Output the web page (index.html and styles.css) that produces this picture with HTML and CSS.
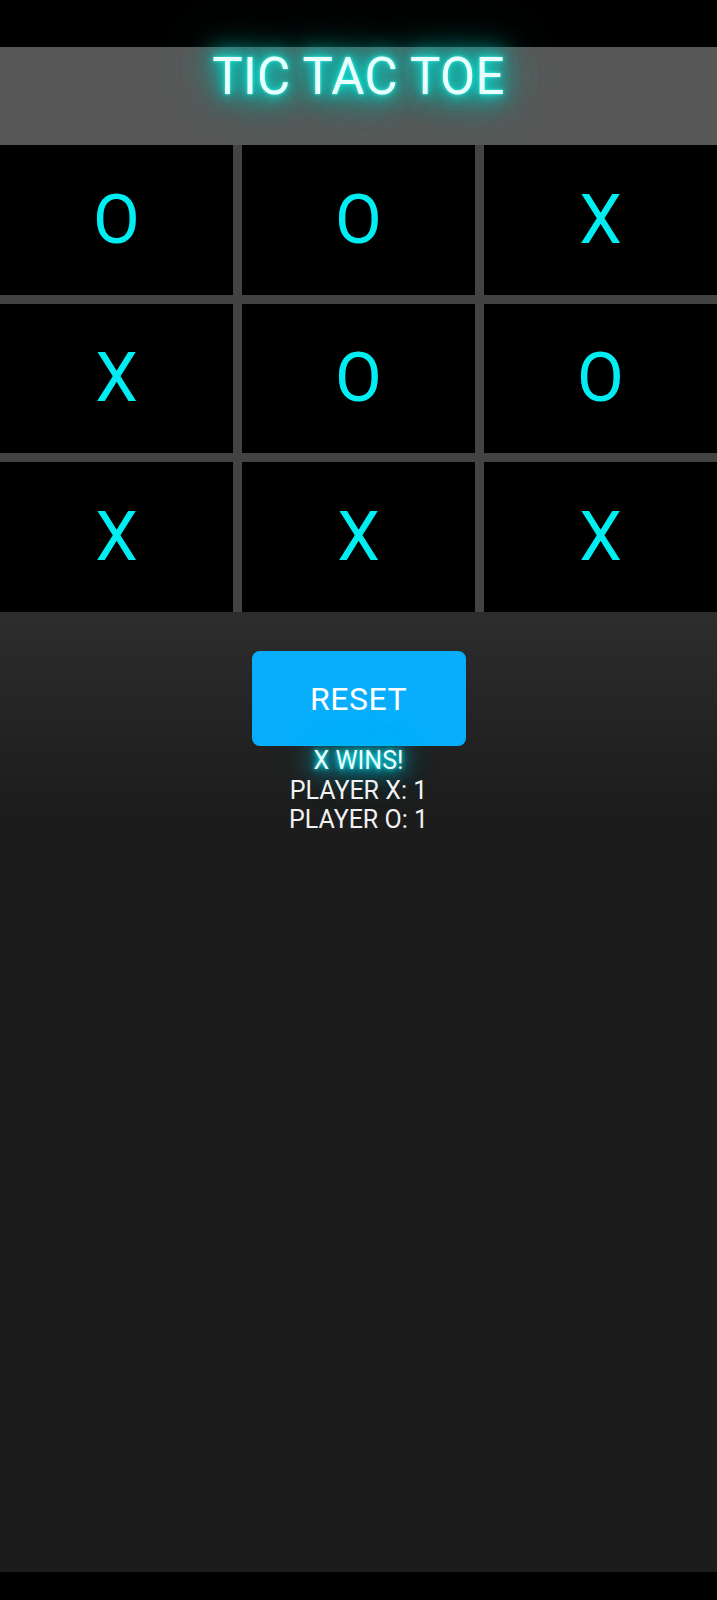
FILE: index.html
```html
<!DOCTYPE html>
<html>
<head>
<meta charset="utf-8">
<title>Tic Tac Toe</title>
<link rel="stylesheet" href="styles.css">
</head>
<body>
<div class="screen">
  <div class="status-bar"></div>
  <header class="header">
    <h1 class="title">TIC TAC TOE</h1>
  </header>
  <div class="board">
    <div class="cell">O</div>
    <div class="cell">O</div>
    <div class="cell">X</div>
    <div class="cell">X</div>
    <div class="cell">O</div>
    <div class="cell">O</div>
    <div class="cell">X</div>
    <div class="cell">X</div>
    <div class="cell">X</div>
  </div>
  <main class="panel">
    <button class="reset">RESET</button>
    <div class="info">
      <div class="winner">X WINS!</div>
      <div class="score">PLAYER X: 1</div>
      <div class="score">PLAYER O: 1</div>
    </div>
  </main>
  <div class="nav-bar"></div>
</div>
</body>
</html>
```

FILE: styles.css
```css
* { box-sizing: border-box; }
html, body {
  margin: 0;
  padding: 0;
  background: #000;
}
body {
  font-family: Roboto, "Noto Sans", sans-serif;
}
.screen {
  width: 717px;
  height: 1600px;
  display: flex;
  flex-direction: column;
  overflow: hidden;
}
.status-bar {
  height: 47px;
  background: #000;
  flex: none;
}
.header {
  height: 98px;
  flex: none;
  background: #585858;
  display: flex;
  justify-content: center;
  align-items: flex-start;
}
.title {
  margin: 0;
  font-weight: 400;
  font-size: 51px;
  line-height: 60px;
  letter-spacing: 0.3px;
  color: #eafffd;
  text-shadow: 0 0 3px #40f5e8, 0 0 8px #14dccf, 0 0 16px #0ad0c4, 0 0 22px #0ad0c4, 0 0 30px #02c2b6, 0 0 40px #02c2b6, 0 0 54px #00b0a6;
}
.board {
  flex: none;
  height: 467px;
  display: grid;
  grid-template-columns: repeat(3, 1fr);
  grid-template-rows: repeat(3, 1fr);
  gap: 9px;
  background: #434343;
}
.cell {
  background: #000;
  display: flex;
  align-items: center;
  justify-content: center;
  color: #00eef2;
  font-size: 68px;
  line-height: 1;
}
.panel {
  flex: 1;
  background: linear-gradient(to bottom, #2d2d2d 0px, #1c1c1c 200px, #1c1c1c 100%);
  display: flex;
  flex-direction: column;
  align-items: center;
  padding-top: 39px;
}
.reset {
  width: 214px;
  height: 95px;
  border: none;
  border-radius: 8px;
  background: #08aefc;
  color: #fff;
  font-family: Roboto, "Noto Sans", sans-serif;
  font-size: 32px;
  letter-spacing: 0.5px;
  padding: 0;
}
.info {
  display: flex;
  flex-direction: column;
  align-items: center;
  color: #f2f2f2;
  font-size: 25px;
  line-height: 29.5px;
}
.winner {
  color: #effffd;
  text-shadow: 0 0 4px #10e8e8, 0 0 10px #00d4e4, 0 0 20px #00c4e0, 0 0 30px #00c0e0, 0 0 44px #00b8dc;
}
.nav-bar {
  height: 28px;
  flex: none;
  background: #000;
}
```
